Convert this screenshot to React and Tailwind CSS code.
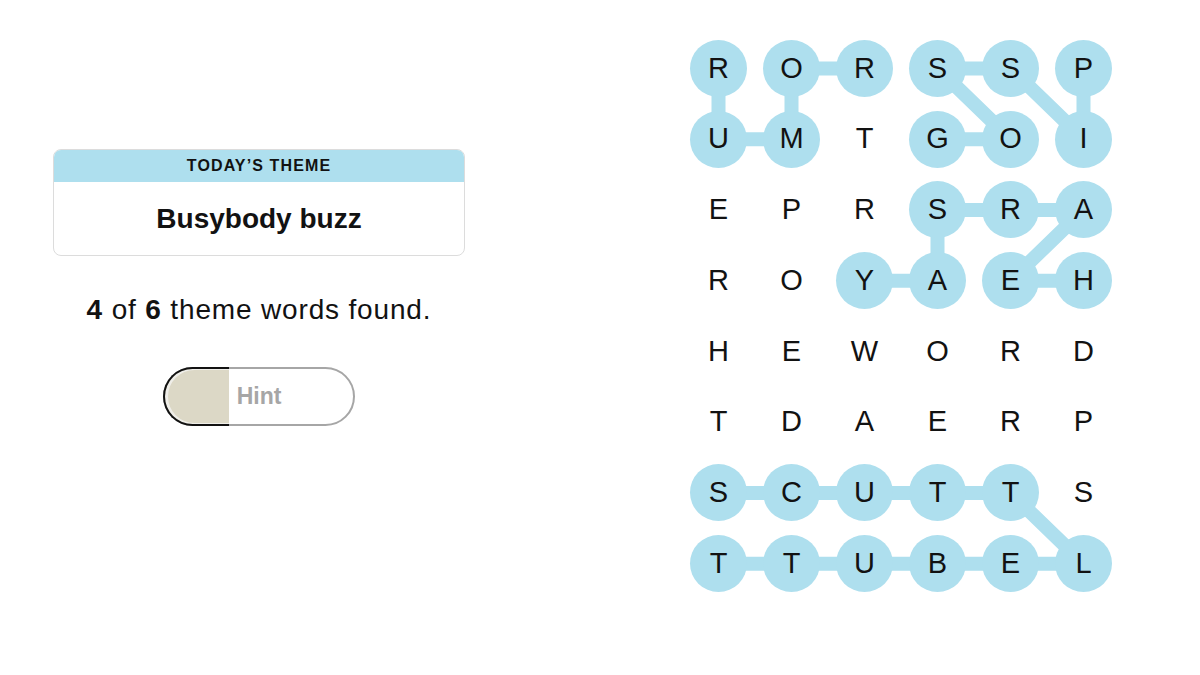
import React from "react";

const letters = [
  "RORSSP",
  "UMTGOI",
  "EPRSRA",
  "ROYAEH",
  "HEWORD",
  "TDAERP",
  "SCUTTS",
  "TTUBEL",
];

const words = [
  [[0, 0], [1, 0], [1, 1], [0, 1], [0, 2]],
  [[1, 3], [1, 4], [0, 3], [0, 4], [1, 5], [0, 5]],
  [[3, 5], [3, 4], [2, 5], [2, 4], [2, 3], [3, 3], [3, 2]],
  [[6, 0], [6, 1], [6, 2], [6, 3], [6, 4], [7, 5], [7, 4], [7, 3], [7, 2], [7, 1], [7, 0]],
];

const CW = 73;
const CH = 70.75;

const found = new Set(words.flat().map(([r, c]) => `${r}-${c}`));

const Board = () => {
  return (
    <div className="relative w-[438px] h-[566px]">
      <svg className="absolute inset-0" width="438" height="566">
        {words.map((w, i) => (
          <polyline
            key={i}
            points={w.map(([r, c]) => `${c * CW + CW / 2},${r * CH + CH / 2}`).join(" ")}
            fill="none"
            stroke="#aedfee"
            strokeWidth="14"
            strokeLinejoin="round"
          />
        ))}
      </svg>
      <div className="relative grid grid-cols-6 grid-rows-8 w-full h-full">
        {letters.map((row, r) =>
          row.split("").map((ch, c) => (
            <div key={`${r}-${c}`} className="flex items-center justify-center">
              <div
                className={
                  "w-[57px] h-[57px] rounded-full flex items-center justify-center text-[29px] text-[#121212] " +
                  (found.has(`${r}-${c}`) ? "bg-[#aedfee]" : "")
                }
              >
                {ch}
              </div>
            </div>
          ))
        )}
      </div>
    </div>
  );
};

export default function App() {
  return (
    <div
      className="w-[1200px] h-[675px] bg-white flex items-start text-[#121212]"
      style={{ fontFamily: '"Liberation Sans", Arial, sans-serif' }}
    >
      <div className="ml-[53px] mt-[149px] w-[412px] flex flex-col items-center">
        <div className="w-full border border-[#dcdcdc] rounded-lg overflow-hidden">
          <div className="h-[32px] bg-[#aedfee] flex items-center justify-center text-[16px] font-semibold tracking-[0.07em]">
            TODAY’S THEME
          </div>
          <div className="h-[73px] flex items-center justify-center text-[28px] font-bold">
            Busybody buzz
          </div>
        </div>
        <p className="mt-[38px] text-[28px] leading-[32px] tracking-[0.03em]">
          <b>4</b> of <b>6</b> theme words found.
        </p>
        <button className="relative mt-[41px] w-[192px] h-[59px] rounded-full border-2 border-[#a6a6a6] flex items-center justify-center">
          <span className="absolute left-[-2px] top-[-2px] bottom-[-2px] w-[66px] rounded-l-full border-2 border-r-0 border-[#121212] bg-[#dcd8c6] shadow-[inset_2px_0_0_1px_#efeee9]" />
          <span className="relative text-[23px] font-bold text-[#a6a6a6]">Hint</span>
        </button>
      </div>
      <div className="ml-[217px] mt-[33px]">
        <Board />
      </div>
    </div>
  );
}
